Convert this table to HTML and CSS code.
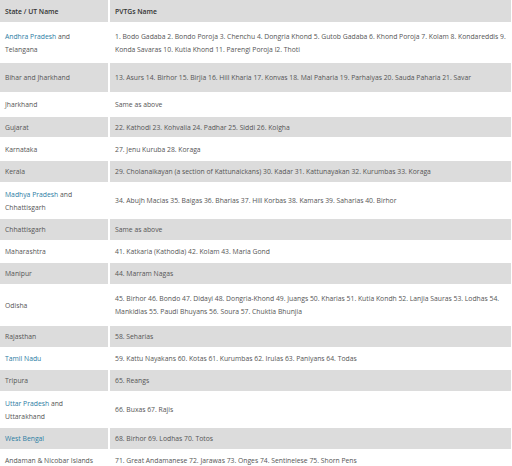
FILE: index.html
```html
<!DOCTYPE html>
<html>
<head>
<meta charset="utf-8">
<link rel="stylesheet" href="styles.css">
</head>
<body>
<table class="pvtg">
  <thead>
    <tr class="hdr"><th class="c1">State / UT Name</th><th>PVTGs Name</th></tr>
  </thead>
  <tbody>
    <tr class="odd h39"><td class="c1"><a>Andhra Pradesh</a> and Telangana</td><td>1. Bodo Gadaba 2. Bondo Poroja 3. Chenchu 4. Dongria Khond 5. Gutob Gadaba 6. Khond Poroja 7. Kolam 8. Kondareddis 9. Konda Savaras 10. Kutia Khond 11. Parengi Poroja l2. Thoti</td></tr>
    <tr class="even h29"><td class="c1">Bihar and Jharkhand</td><td>13. Asurs 14. Birhor 15. Birjia 16. Hill Kharia 17. Konvas 18. Mal Paharia 19. Parhaiyas 20. Sauda Paharia 21. Savar</td></tr>
    <tr class="odd h23"><td class="c1">Jharkhand</td><td>Same as above</td></tr>
    <tr class="even h20"><td class="c1">Gujarat</td><td>22. Kathodi 23. Kohvalia 24. Padhar 25. Siddi 26. Kolgha</td></tr>
    <tr class="odd h22"><td class="c1">Karnataka</td><td>27. Jenu Kuruba 28. Koraga</td></tr>
    <tr class="even h21"><td class="c1">Kerala</td><td>29. Cholanaikayan (a section of Kattunaickans) 30. Kadar 31. Kattunayakan 32. Kurumbas 33. Koraga</td></tr>
    <tr class="odd h35"><td class="c1"><a>Madhya Pradesh</a> and Chhattisgarh</td><td>34. Abujh Macias 35. Baigas 36. Bharias 37. Hill Korbas 38. Kamars 39. Saharias 40. Birhor</td></tr>
    <tr class="even h21"><td class="c1">Chhattisgarh</td><td>Same as above</td></tr>
    <tr class="odd h21"><td class="c1">Maharashtra</td><td>41. Katkaria (Kathodia) 42. Kolam 43. Maria Gond</td></tr>
    <tr class="even h21"><td class="c1">Manipur</td><td>44. Marram Nagas</td></tr>
    <tr class="odd h40"><td class="c1">Odisha</td><td>45. Birhor 46. Bondo 47. Didayi 48. Dongria-Khond 49. Juangs 50. Kharias 51. Kutia Kondh 52. Lanjia Sauras 53. Lodhas 54. Mankidias 55. Paudi Bhuyans 56. Soura 57. Chuktia Bhunjia</td></tr>
    <tr class="even h21"><td class="c1">Rajasthan</td><td>58. Seharias</td></tr>
    <tr class="odd h21"><td class="c1"><a>Tamil Nadu</a></td><td>59. Kattu Nayakans 60. Kotas 61. Kurumbas 62. Irulas 63. Paniyans 64. Todas</td></tr>
    <tr class="even h21"><td class="c1">Tripura</td><td>65. Reangs</td></tr>
    <tr class="odd h35"><td class="c1"><a>Uttar Pradesh</a> and Uttarakhand</td><td>66. Buxas 67. Rajis</td></tr>
    <tr class="even h21"><td class="c1"><a>West Bengal</a></td><td>68. Birhor 69. Lodhas 70. Totos</td></tr>
    <tr class="odd h21"><td class="c1">Andaman &amp; Nicobar Islands</td><td>71. Great Andamanese 72. Jarawas 73. Onges 74. Sentinelese 75. Shorn Pens</td></tr>
  </tbody>
</table>
</body>
</html>
```

FILE: styles.css
```css
html, body {
  margin: 0;
  padding: 0;
  background: #fff;
}
.pvtg {
  width: 511px;
  border-collapse: collapse;
  font-family: "Open Sans", "Noto Sans", sans-serif;
  font-size: 6.8px;
  line-height: 13px;
  color: #555;
  table-layout: fixed;
}
.pvtg th, .pvtg td {
  padding: 0 0 0 5px;
  text-align: left;
  vertical-align: middle;
  border-bottom: 1px solid #fff;
  border-right: 2px solid #fff;
}
.pvtg th:last-child, .pvtg td:last-child {
  border-right: none;
}
.pvtg .c1 {
  width: 93px;
  padding-right: 10px;
}
.hdr th {
  background: #dcdcdc;
  color: #333;
  font-weight: 600;
  height: 22px;
}
.even td {
  background: #dcdcdc;
}
.odd td {
  background: #fff;
}
.pvtg a {
  color: #2b7ca3;
  text-decoration: none;
}
.h20 td { height: 20px; }
.h21 td { height: 21px; }
.h22 td { height: 22px; }
.h23 td { height: 23px; }
.h29 td { height: 29px; }
.h35 td { height: 35px; }
.h39 td { height: 39px; }
.h40 td { height: 40px; }
```
